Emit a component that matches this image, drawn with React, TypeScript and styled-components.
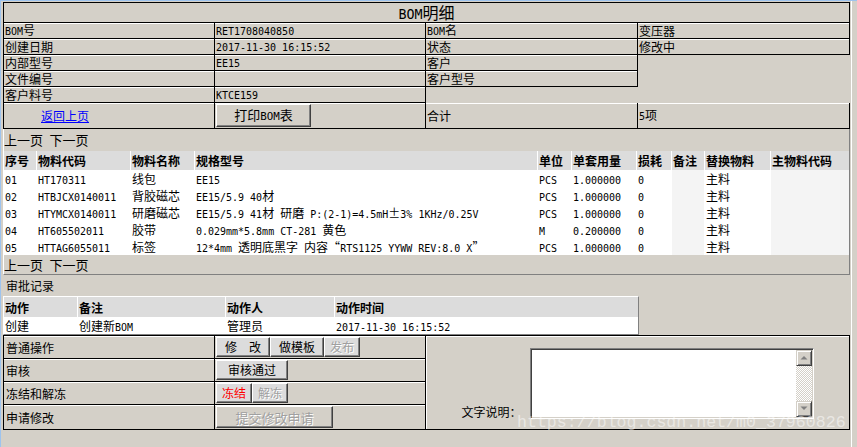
import React from "react";
import styled, { createGlobalStyle } from "styled-components";

const GlobalStyle = createGlobalStyle`
  html, body { margin: 0; padding: 0; background: #d4d0c8; }
  body {
    font-family: "Noto Sans CJK SC", "DejaVu Sans Mono", sans-serif;
    font-size: 12px;
    color: #000;
  }
  * { box-sizing: border-box; }
`;

/* ---------- mixed CJK / half-width text ---------- */
const HAN = /([\u00b1\u2010-\u206f\u3000-\u303f\u3400-\u9fff\uff00-\uffef]+)/;

const Run = styled.span`
  white-space: pre;
`;

const Han = styled.span`
  font-family: "Noto Sans CJK SC", sans-serif;
`;

const Latin = styled.span`
  font-family: "DejaVu Sans Mono", monospace;
  font-size: 0.8333em;
`;

const T = ({ children }: { children: string }) => (
  <Run>
    {children
      .split(HAN)
      .filter(Boolean)
      .map((part, i) =>
        HAN.test(part) ? <Han key={i}>{part}</Han> : <Latin key={i}>{part}</Latin>
      )}
  </Run>
);

/* ---------- page frame ---------- */
const Page = styled.div`
  position: relative;
  width: 857px;
  height: 447px;
  background: #d4d0c8;
  border-top: 1px solid #9dc3ee;
  border-left: 1px solid #9dc3ee;
  overflow: hidden;
`;

const Frame = styled.div`
  width: 851px;
  height: 100%;
  padding: 1px 1px 0 2px;
  border-right: 1px solid #fff;
`;

/* ---------- BOM header table ---------- */
const InfoGrid = styled.div`
  display: grid;
  grid-template-columns: 211px 211px 212px 212px;
  grid-template-rows: 20px repeat(5, 16px) 26px;
  width: 847px;
  border-top: 1px solid #000;
  border-left: 1px solid #000;
`;

const Title = styled.div`
  grid-column: 1 / -1;
  border-right: 1px solid #000;
  border-bottom: 1px solid #000;
  text-align: center;
  font-size: 16px;
  line-height: 18px;
`;

const InfoCell = styled.div<{ $pad?: number }>`
  display: flex;
  align-items: center;
  border-right: 1px solid #000;
  border-bottom: 1px solid #000;
  box-shadow: inset 0 1px #fff;
  padding-left: ${(p) => p.$pad ?? 1}px;
  white-space: nowrap;
  line-height: 15px;
`;

const Blank = styled.div<{ $rows?: number; $col: number; $row: number }>`
  grid-column: ${(p) => p.$col};
  grid-row: ${(p) => p.$row} / span ${(p) => p.$rows ?? 1};
`;

const BackLink = styled.a`
  color: #0000ff;
  text-decoration: underline;
  cursor: pointer;
`;

/* ---------- buttons ---------- */
const Btn = styled.button<{ $w: number; $h?: number; $face?: string; $size?: number; $red?: boolean }>`
  width: ${(p) => p.$w}px;
  height: ${(p) => p.$h ?? 20}px;
  margin: 0;
  padding: 0;
  font-family: inherit;
  font-size: ${(p) => p.$size ?? 12}px;
  line-height: 1;
  background: ${(p) => p.$face ?? "#dcdcdc"};
  border: 1px solid;
  border-color: #fff #404040 #404040 #fff;
  box-shadow: inset -1px -1px #808080;
  color: ${(p) => (p.$red ? "#ff0000" : "#000")};
  white-space: nowrap;
  &:disabled {
    color: #a0a0a0;
    text-shadow: 1px 1px #fff;
  }
`;

/* ---------- items panel ---------- */
const ItemsPanel = styled.section`
  width: 847px;
  border-left: 1px solid #fff;
  border-right: 1px solid #808080;
  border-bottom: 1px solid #808080;
`;

const Pager = styled.div<{ $h: number }>`
  height: ${(p) => p.$h}px;
  line-height: ${(p) => p.$h}px;
  font-size: 13px;
  white-space: nowrap;
`;

const ITEM_COLS = "32px 93px 63px 342px 33px 64px 34px 32px 65px 78px";

const ItemRow = styled.div<{ $head?: boolean }>`
  display: grid;
  grid-template-columns: ${ITEM_COLS};
  column-gap: 1px;
  height: ${(p) => (p.$head ? 19 : 17)}px;
  background: #fff;
  font-weight: ${(p) => (p.$head ? 700 : 400)};
`;

const ItemCell = styled.div<{ $head?: boolean; $empty?: boolean }>`
  background: ${(p) => (p.$head ? "#dcdcdc" : p.$empty ? "#f4f4f4" : "#fff")};
  padding-left: 1px;
  white-space: nowrap;
  display: flex;
  align-items: center;
`;

/* ---------- approval records ---------- */
const SectionLabel = styled.div`
  height: 21px;
  line-height: 21px;
  padding-left: 3px;
`;

const RecordBox = styled.div`
  width: 636px;
  border-top: 1px solid #fff;
  border-left: 1px solid #fff;
  border-right: 1px solid #808080;
  border-bottom: 1px solid #808080;
`;

const RecordRow = styled.div<{ $head?: boolean }>`
  display: grid;
  grid-template-columns: 73px 147px 108px 303px;
  column-gap: 1px;
  height: ${(p) => (p.$head ? 20 : 17)}px;
  background: #fff;
  font-weight: ${(p) => (p.$head ? 700 : 400)};
`;

const RecordCell = styled.div<{ $head?: boolean }>`
  background: ${(p) => (p.$head ? "#dcdcdc" : "#fff")};
  padding-left: 1px;
  display: flex;
  align-items: center;
  white-space: nowrap;
`;

/* ---------- operations ---------- */
const OpsGrid = styled.div`
  display: grid;
  grid-template-columns: 211px 211px 1fr;
  grid-template-rows: 23px 23px 23px 25px;
  width: 847px;
  border-top: 1px solid #000;
  border-left: 1px solid #000;
`;

const OpsCell = styled.div`
  display: flex;
  align-items: center;
  border-right: 1px solid #000;
  border-bottom: 1px solid #000;
  box-shadow: inset 0 1px #fff;
  padding-left: 2px;
  white-space: nowrap;
`;

const BtnCell = styled(OpsCell)`
  padding-left: 1px;
`;

const NoteCell = styled.div`
  grid-column: 3;
  grid-row: 1 / -1;
  display: flex;
  align-items: center;
  justify-content: center;
  border-right: 1px solid #000;
  border-bottom: 1px solid #000;
  box-shadow: inset 1px 1px #fff;
  padding-top: 1px;
`;

const Field = styled.label`
  display: flex;
  align-items: flex-end;
  gap: 8px;
`;

const FieldLabel = styled.span`
  line-height: 14px;
  white-space: nowrap;
`;

const TextBox = styled.div`
  display: flex;
  width: 284px;
  height: 71px;
  background: #fff;
  border: 1px solid;
  border-color: #808080 #fff #fff #808080;
  box-shadow: inset 1px 1px #404040, inset -1px -1px #d4d0c8;
  padding: 1px;
`;

const Input = styled.textarea`
  flex: 1;
  border: 0;
  outline: 0;
  resize: none;
  background: transparent;
  margin: 0;
  padding: 0;
  overflow: hidden;
  font: inherit;
`;

const ScrollBar = styled.div`
  width: 16px;
  display: flex;
  flex-direction: column;
`;

const ScrollBtn = styled.div`
  height: 16px;
  display: flex;
  align-items: center;
  justify-content: center;
  background: #d4d0c8;
  border: 1px solid;
  border-color: #d4d0c8 #404040 #404040 #d4d0c8;
  box-shadow: inset 1px 1px #fff, inset -1px -1px #808080;
`;

const Track = styled.div`
  flex: 1;
  background: repeating-conic-gradient(#d4d0c8 0 25%, #fff 0 50%) 0 0 / 2px 2px;
`;

const Watermark = styled.div`
  position: absolute;
  left: 516px;
  top: 412px;
  font-family: "Liberation Mono", monospace;
  font-size: 16.6px;
  line-height: 20px;
  color: rgba(255, 255, 255, 0.5);
  pointer-events: none;
  white-space: nowrap;
`;

const Arrow = ({ up }: { up?: boolean }) => (
  <svg width="8" height="5" viewBox="0 0 8 5">
    <polygon points={up ? "0.5,4.5 4,1 7.5,4.5" : "0.5,0.5 4,4 7.5,0.5"} fill="#808080" />
  </svg>
);

/* ---------- data ---------- */
const itemHeads = ["序号", "物料代码", "物料名称", "规格型号", "单位", "单套用量", "损耗", "备注", "替换物料", "主物料代码"];

const items: string[][] = [
  ["01", "HT170311", "线包", "EE15", "PCS", "1.000000", "0", "", "主料", ""],
  ["02", "HTBJCX0140011", "背胶磁芯", "EE15/5.9 40材", "PCS", "1.000000", "0", "", "主料", ""],
  ["03", "HTYMCX0140011", "研磨磁芯", "EE15/5.9 41材 研磨 P:(2-1)=4.5mH±3% 1KHz/0.25V", "PCS", "1.000000", "0", "", "主料", ""],
  ["04", "HT605502011", "胶带", "0.029mm*5.8mm CT-281 黄色", "M", "0.200000", "0", "", "主料", ""],
  ["05", "HTTAG6055011", "标签", "12*4mm 透明底黑字 内容“RTS1125 YYWW REV:8.0 X”", "PCS", "1.000000", "0", "", "主料", ""],
];

const recordHeads = ["动作", "备注", "动作人", "动作时间"];
const records = [["创建", "创建新BOM", "管理员", "2017-11-30 16:15:52"]];

export default function App() {
  return (
    <>
      <GlobalStyle />
      <Page>
        <Frame>
          <InfoGrid>
            <Title><T>BOM明细</T></Title>

            <InfoCell><T>BOM号</T></InfoCell>
            <InfoCell><T>RET1708040850</T></InfoCell>
            <InfoCell><T>BOM名</T></InfoCell>
            <InfoCell><T>变压器</T></InfoCell>

            <InfoCell><T>创建日期</T></InfoCell>
            <InfoCell><T>2017-11-30 16:15:52</T></InfoCell>
            <InfoCell><T>状态</T></InfoCell>
            <InfoCell><T>修改中</T></InfoCell>

            <InfoCell><T>内部型号</T></InfoCell>
            <InfoCell><T>EE15</T></InfoCell>
            <InfoCell><T>客户</T></InfoCell>
            <Blank $col={4} $row={4} $rows={3} />

            <InfoCell><T>文件编号</T></InfoCell>
            <InfoCell />
            <InfoCell><T>客户型号</T></InfoCell>

            <InfoCell><T>客户料号</T></InfoCell>
            <InfoCell><T>KTCE159</T></InfoCell>
            <Blank $col={3} $row={6} />

            <InfoCell $pad={37}><BackLink><T>返回上页</T></BackLink></InfoCell>
            <InfoCell><Btn $w={95} $h={23} $face="#d4d0c8" $size={13}><T>打印BOM表</T></Btn></InfoCell>
            <InfoCell><T>合计</T></InfoCell>
            <InfoCell><T>5项</T></InfoCell>
          </InfoGrid>

          <ItemsPanel>
            <Pager $h={22}><T>上一页 下一页</T></Pager>
            <ItemRow $head>
              {itemHeads.map((h) => (
                <ItemCell key={h} $head><T>{h}</T></ItemCell>
              ))}
            </ItemRow>
            {items.map((row) => (
              <ItemRow key={row[0]}>
                {row.map((v, i) => (
                  <ItemCell key={i} $empty={v === ""}>{v && <T>{v}</T>}</ItemCell>
                ))}
              </ItemRow>
            ))}
            <Pager $h={19}><T>上一页 下一页</T></Pager>
          </ItemsPanel>

          <SectionLabel><T>审批记录</T></SectionLabel>
          <RecordBox>
            <RecordRow $head>
              {recordHeads.map((h) => (
                <RecordCell key={h} $head><T>{h}</T></RecordCell>
              ))}
            </RecordRow>
            {records.map((r, ri) => (
              <RecordRow key={ri}>
                {r.map((v, i) => (
                  <RecordCell key={i}><T>{v}</T></RecordCell>
                ))}
              </RecordRow>
            ))}
          </RecordBox>

          <OpsGrid>
            <OpsCell><T>普通操作</T></OpsCell>
            <BtnCell>
              <Btn $w={54}><T>修　改</T></Btn>
              <Btn $w={54}><T>做模板</T></Btn>
              <Btn $w={36} disabled><T>发布</T></Btn>
            </BtnCell>
            <NoteCell>
              <Field>
                <FieldLabel><T>文字说明：</T></FieldLabel>
                <TextBox>
                  <Input />
                  <ScrollBar>
                    <ScrollBtn><Arrow up /></ScrollBtn>
                    <Track />
                    <ScrollBtn><Arrow /></ScrollBtn>
                  </ScrollBar>
                </TextBox>
              </Field>
            </NoteCell>

            <OpsCell><T>审核</T></OpsCell>
            <BtnCell>
              <Btn $w={72}><T>审核通过</T></Btn>
            </BtnCell>

            <OpsCell><T>冻结和解冻</T></OpsCell>
            <BtnCell>
              <Btn $w={36} $red><T>冻结</T></Btn>
              <Btn $w={36} disabled><T>解冻</T></Btn>
            </BtnCell>

            <OpsCell><T>申请修改</T></OpsCell>
            <BtnCell>
              <Btn $w={117} $h={22} $size={13} $face="#d4d0c8" disabled><T>提交修改申请</T></Btn>
            </BtnCell>
          </OpsGrid>
        </Frame>
        <Watermark>https://blog.csdn.net/m0_37960826</Watermark>
      </Page>
    </>
  );
}
